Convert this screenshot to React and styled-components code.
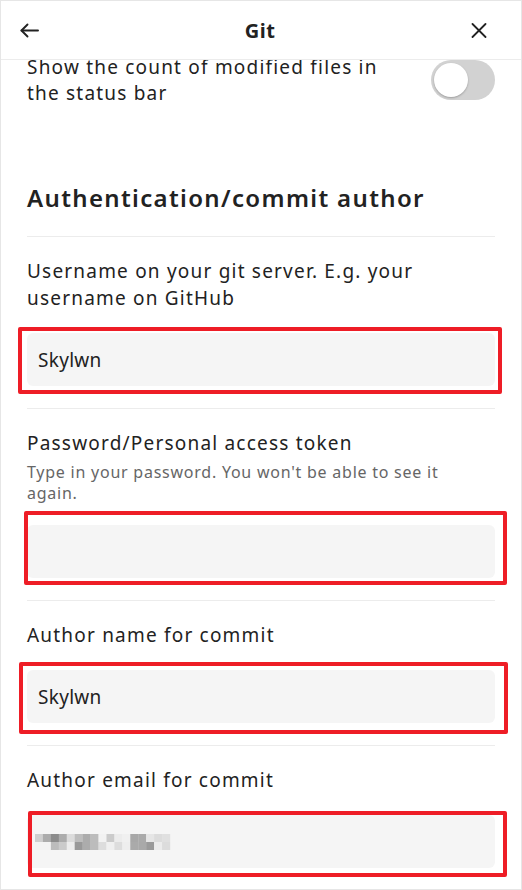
import React from "react";
import styled, { createGlobalStyle } from "styled-components";

const Global = createGlobalStyle`
  html, body { margin: 0; padding: 0; background: #fff; }
  * { box-sizing: border-box; }
  body { font-family: "Noto Sans", "Open Sans", sans-serif; color: #222; }
`;

const Frame = styled.div`
  width: 522px;
  height: 890px;
  border: 1px solid #e6e6e6;
  overflow: hidden;
  background: #fff;
  display: flex;
  flex-direction: column;
`;

const Header = styled.header`
  position: relative;
  z-index: 2;
  flex: 0 0 auto;
  height: 59px;
  border-bottom: 1px solid #ececec;
  background: #fff;
  display: grid;
  grid-template-columns: 60px 1fr 60px;
  align-items: center;
  padding: 0 34px 0 19px;
`;

const IconButton = styled.button`
  border: 0;
  background: none;
  padding: 0;
  display: flex;
  align-items: center;
  justify-content: ${(p) => (p.$end ? "flex-end" : "flex-start")};
  color: #222;
  height: 100%;
`;

const Title = styled.h1`
  margin: 0 0 0 13px;
  text-align: center;
  font-size: 20px;
  font-weight: 700;
  letter-spacing: 0.5px;
`;

const Content = styled.main`
  margin-top: -6px;
  padding: 0 26px;
  display: flex;
  flex-direction: column;
`;

const ToggleRow = styled.div`
  display: flex;
  align-items: center;
  justify-content: space-between;
  gap: 30px;
  padding-bottom: 22px;
`;

const RowText = styled.div`
  font-size: 19px;
  line-height: 26px;
  letter-spacing: 1.2px;
  max-width: 372px;
`;

const Track = styled.div`
  flex: 0 0 auto;
  width: 64px;
  height: 40px;
  border-radius: 20px;
  background: #d2d2d2;
  display: flex;
  align-items: center;
  padding: 0 3px;
`;

const Knob = styled.div`
  width: 34px;
  height: 34px;
  border-radius: 50%;
  background: #fff;
  box-shadow: 0 1px 2px rgba(0, 0, 0, 0.25);
`;

const SectionTitle = styled.h2`
  margin: 0;
  padding: 54px 0 22px;
  font-size: 24px;
  line-height: 32px;
  font-weight: 600;
  letter-spacing: 1.35px;
  border-bottom: 1px solid #ececec;
`;

const Item = styled.section`
  padding: 21px 0 22px;
  border-bottom: ${(p) => (p.$last ? "0" : "1px solid #ececec")};
`;

const Label = styled.div`
  font-size: 19px;
  line-height: 27px;
  letter-spacing: 1.2px;
  padding-right: 30px;
`;

const Desc = styled.div`
  margin-top: 5px;
  padding-right: 40px;
  font-size: 16px;
  line-height: 21px;
  letter-spacing: 0.76px;
  color: #666;
`;

const FieldWrap = styled.div`
  position: relative;
  margin-top: 21px;
`;

const Field = styled.div`
  height: 53px;
  border-radius: 6px;
  background: #f5f5f5;
  display: flex;
  align-items: center;
  padding: 0 11px;
  font-size: 19px;
  letter-spacing: 0.3px;
  color: #222;
`;

const Mark = styled.div`
  position: absolute;
  top: ${(p) => p.$t}px;
  right: ${(p) => p.$r}px;
  bottom: ${(p) => p.$b}px;
  left: ${(p) => p.$l}px;
  border: 4px solid #ee1d26;
  border-radius: 2px;
  pointer-events: none;
`;

const pixels = [
  ["#cfcfcf", "#acacac", "#8c8c8c", "#acacac", "#dcdcdc", "#bdbdbd", "#acacac", "#bcbcbc", "#f2f2f2", "#cbcbcb", "#ececec", "#f0f0f0", "#a8a8a8", "#aaaaaa", "#e6e6e6", "#dcdcdc", "#e0e0e0"],
  ["#f3f3f3", "#f3f3f3", "#bcbcbc", "#cbcbcb", "#ededed", "#999999", "#acacac", "#bcbcbc", "#dddddd", "#f0f0f0", "#dddddd", "#eeeeee", "#aaaaaa", "#a9a9a9", "#9a9a9a", "#ececec", "#dcdcdc"],
];

function Pixelated() {
  const w = 7.94;
  return (
    <svg width="136" height="16" viewBox="0 0 136 16" aria-label="hidden email" style={{ marginLeft: -3 }}>
      {pixels.map((row, r) =>
        row.map((c, i) => (
          <rect key={`${r}-${i}`} x={i * w} y={r * 8} width={w + 0.2} height="8" fill={c} />
        ))
      )}
    </svg>
  );
}

function BackIcon() {
  return (
    <svg width="19" height="15" viewBox="0 0 19 15" fill="none" stroke="#222" strokeWidth="1.9" strokeLinecap="round" strokeLinejoin="round">
      <path d="M18 7.5H1.5" />
      <path d="M7.5 1.5L1.5 7.5l6 6" />
    </svg>
  );
}

function CloseIcon() {
  return (
    <svg width="16" height="15" viewBox="0 0 16 15" fill="none" stroke="#222" strokeWidth="1.8" strokeLinecap="round">
      <path d="M1.5 1l13 13" />
      <path d="M14.5 1l-13 13" />
    </svg>
  );
}

function Input({ value, mark, children }) {
  return (
    <FieldWrap>
      <Field>{children || value}</Field>
      <Mark $t={mark[0]} $r={mark[1]} $b={mark[2]} $l={mark[3]} />
    </FieldWrap>
  );
}

export default function App() {
  return (
    <>
      <Global />
      <Frame>
        <Header>
          <IconButton aria-label="Back"><BackIcon /></IconButton>
          <Title>Git</Title>
          <IconButton $end aria-label="Close"><CloseIcon /></IconButton>
        </Header>
        <Content>
          <ToggleRow>
            <RowText>Show the count of modified files in the status bar</RowText>
            <Track><Knob /></Track>
          </ToggleRow>
          <SectionTitle>Authentication/commit author</SectionTitle>
          <Item>
            <Label>Username on your git server. E.g. your username on GitHub</Label>
            <Input value="Skylwn" mark={[-6, -7, -8, -9]} />
          </Item>
          <Item>
            <Label>Password/Personal access token</Label>
            <Desc>Type in your password. You won't be able to see it again.</Desc>
            <Input value="" mark={[-14, -12, -7, -3]} />
          </Item>
          <Item>
            <Label>Author name for commit</Label>
            <Input value="Skylwn" mark={[-8, -13, -11, -8]} />
          </Item>
          <Item $last>
            <Label>Author email for commit</Label>
            <Input mark={[-4, -12, -9, 1]}>
              <Pixelated />
            </Input>
          </Item>
        </Content>
      </Frame>
    </>
  );
}
